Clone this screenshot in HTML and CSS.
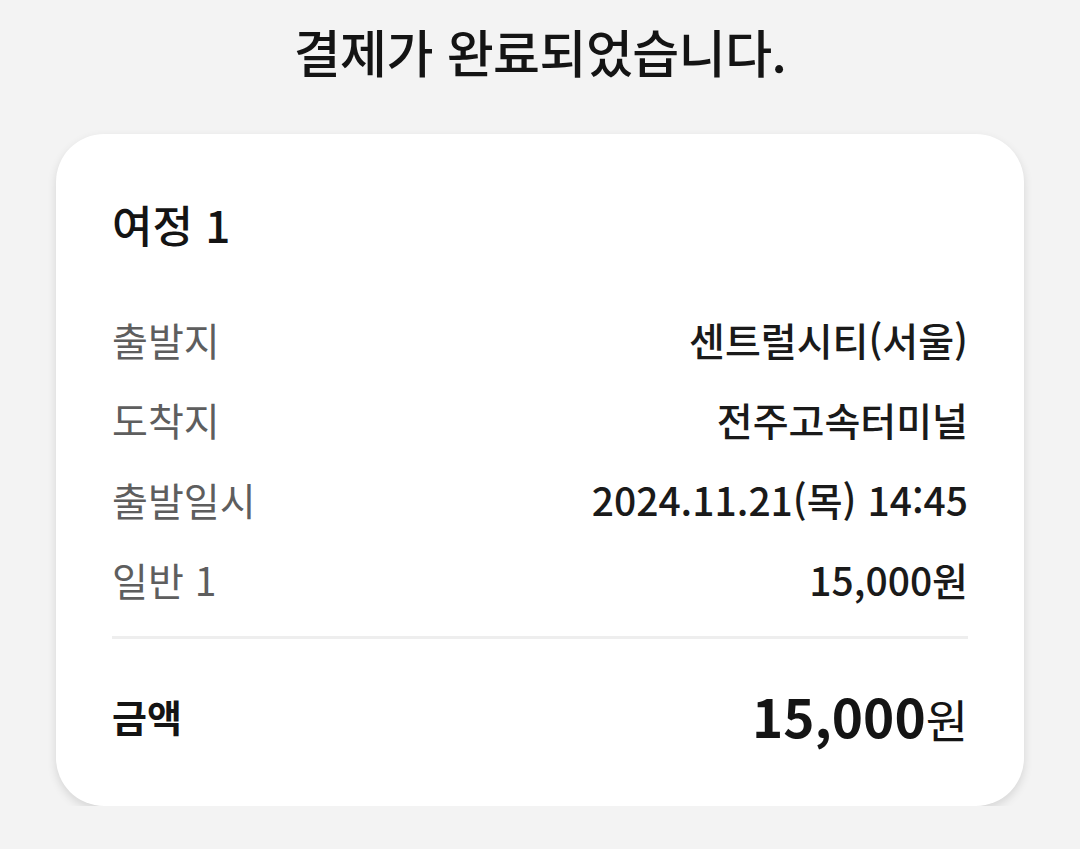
FILE: index.html
```html
<!DOCTYPE html>
<html lang="ko">
<head>
<meta charset="utf-8">
<link rel="stylesheet" href="styles.css">
</head>
<body>
<main class="page">
  <h1 class="title">결제가 완료되었습니다.</h1>
  <section class="card">
    <h2 class="trip">여정 1</h2>
    <dl class="rows">
      <div class="row"><dt>출발지</dt><dd>센트럴시티(서울)</dd></div>
      <div class="row"><dt>도착지</dt><dd>전주고속터미널</dd></div>
      <div class="row"><dt>출발일시</dt><dd>2024.11.21(목) 14:45</dd></div>
      <div class="row"><dt>일반 1</dt><dd>15,000원</dd></div>
    </dl>
    <div class="divider"></div>
    <div class="total">
      <span class="total-label">금액</span>
      <span class="total-value"><span class="num">15,000</span>원</span>
    </div>
  </section>
</main>
</body>
</html>
```

FILE: styles.css
```css
* { box-sizing: border-box; }
html, body {
  margin: 0;
  padding: 0;
  background: #f3f3f3;
  font-family: "Noto Sans CJK KR", "Noto Sans", sans-serif;
  color: #141414;
}
.page {
  padding: 18px 56px 0;
}
.title {
  margin: 0;
  text-align: center;
  font-size: 51px;
  font-weight: 500;
  line-height: 66px;
  letter-spacing: -0.5px;
}
.card {
  margin-top: 50px;
  background: #fff;
  border-radius: 48px;
  box-shadow: 0 4px 10px rgba(0,0,0,0.12);
  padding: 49px 56px 15px;
}
.trip {
  margin: 0;
  font-size: 44px;
  font-weight: 500;
  line-height: 82px;
}
.rows {
  margin: 34px 0 0;
}
.row {
  display: flex;
  justify-content: space-between;
  align-items: center;
  height: 80px;
}
.row dt {
  font-size: 39px;
  color: #5e5e5e;
}
.row dd {
  margin: 0;
  font-size: 39px;
  font-weight: 500;
  color: #1a1a1a;
}
.divider {
  margin-top: 17px;
  height: 3px;
  background: #eeeeee;
}
.total {
  display: flex;
  justify-content: space-between;
  align-items: center;
  height: 152px;
}
.total-label {
  font-size: 38px;
  font-weight: 700;
}
.total-value {
  font-size: 46px;
  font-weight: 400;
}
.total-value .num {
  font-size: 53px;
  font-weight: 700;
}
```
